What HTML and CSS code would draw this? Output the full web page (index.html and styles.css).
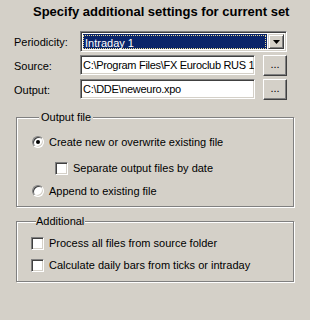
FILE: index.html
```html
<!DOCTYPE html>
<html lang="en">
<head>
  <meta charset="UTF-8" />
  <title>Additional settings</title>
  <link rel="stylesheet" href="styles.css">
</head>
<body>

<div class="dialog">
  <h1 class="title">Specify additional settings for current set</h1>

  <div class="fields">
    <label class="field-label">Periodicity:</label>
    <div class="combo">
      <span class="combo-value"><span class="combo-text">Intraday 1</span></span>
      <span class="combo-btn">
        <svg width="7" height="4" viewBox="0 0 7 4"><path d="M0 0h7L3.5 4z" fill="#000"/></svg>
      </span>
    </div>

    <label class="field-label">Source:</label>
    <div class="edit">C:\Program Files\FX Euroclub RUS 1</div>
    <button class="browse">...</button>

    <label class="field-label">Output:</label>
    <div class="edit">C:\DDE\neweuro.xpo</div>
    <button class="browse">...</button>
  </div>

  <fieldset class="group group-output">
    <legend>Output file</legend>
    <div class="option first"><span class="radio checked"></span>Create new or overwrite existing file</div>
    <div class="option sub"><span class="check"></span>Separate output files by date</div>
    <div class="option last"><span class="radio"></span>Append to existing file</div>
  </fieldset>

  <fieldset class="group group-additional">
    <legend>Additional</legend>
    <div class="option"><span class="check"></span>Process all files from source folder</div>
    <div class="option"><span class="check"></span>Calculate daily bars from ticks or intraday</div>
  </fieldset>
</div>

</body>
</html>
```

FILE: styles.css
```css
body {
  margin: 0;
  background: #d4d0c8;
  font-family: "Liberation Sans", Arial, sans-serif;
  font-size: 11px;
  color: #000;
}

.dialog {
  width: 310px;
  height: 320px;
  overflow: hidden;
}

.title {
  margin: 0;
  padding: 4px 0 0 33px;
  font-size: 13px;
  line-height: 16px;
  font-weight: bold;
  white-space: nowrap;
}

/* label / field / button rows */
.fields {
  display: grid;
  grid-template-columns: 66px 175px 32px;
  grid-auto-rows: 21px;
  row-gap: 3px;
  padding: 11px 0 0 14px;
}

.field-label {
  display: flex;
  align-items: center;
}

.combo,
.edit {
  box-sizing: border-box;
  background: #fff;
  border: 1px solid;
  border-color: #808080 #fff #fff #808080;
  box-shadow: inset 1px 1px 0 #404040, inset -1px -1px 0 #d4d0c8;
}

.combo {
  grid-column: span 2;
  display: flex;
  padding: 2px;
}

.combo-value {
  flex: 1;
  background: #0a246a;
  padding: 1px 1px 0 0;
  display: flex;
}

.combo-text {
  flex: 1;
  border: 1px dotted #e8d890;
  color: #fff;
  padding-left: 1px;
  line-height: 14px;
}

.combo-btn {
  width: 16px;
  margin-left: 1px;
  box-sizing: border-box;
  background: #d4d0c8;
  border: 1px solid;
  border-color: #d4d0c8 #404040 #404040 #d4d0c8;
  box-shadow: inset 1px 1px 0 #fff, inset -1px -1px 0 #808080;
  display: flex;
  align-items: center;
  justify-content: center;
}

.edit {
  height: 20px;
  padding: 0 2px;
  line-height: 18px;
  letter-spacing: -0.3px;
  white-space: nowrap;
  overflow: hidden;
}

.browse {
  justify-self: end;
  width: 24px;
  height: 21px;
  padding: 0 0 3px;
  font: inherit;
  line-height: 12px;
  background: #d4d0c8;
  border: 1px solid;
  border-color: #fff #404040 #404040 #fff;
  box-shadow: inset -1px -1px 0 #808080, inset 1px 1px 0 #d4d0c8;
}

/* group boxes */
.group {
  margin: 10px 16px 0;
  padding: 0;
  border: 1px solid #808080;
  box-shadow: 1px 1px 0 #fff, inset 1px 1px 0 #fff;
}

.group legend {
  margin-left: 7px;
  padding: 0 2px;
  line-height: 14px;
  background: #d4d0c8;
}

.group-output {
  padding: 10px 0 7px 15px;
}

.group-additional {
  margin-top: 7px;
  padding: 7px 0 8px 14px;
}

.group-additional legend {
  margin-left: 5px;
  padding: 0 1px 0 0;
}

.option {
  display: flex;
  align-items: center;
  height: 16px;
  white-space: nowrap;
}

.group-output .option + .option {
  margin-top: 10px;
}

.group-output .option.last {
  margin-top: 7px;
}

.group-additional .option + .option {
  margin-top: 6px;
}

.option.sub {
  padding-left: 23px;
}

.radio {
  position: relative;
  width: 12px;
  height: 12px;
  box-sizing: border-box;
  margin-right: 5px;
  border-radius: 50%;
  background: #fff;
  border: 1px solid;
  border-color: #808080 #fff #fff #808080;
  box-shadow: inset 1px 1px 0 #404040, inset -1px -1px 0 #d4d0c8;
}

.radio.checked::after {
  content: "";
  position: absolute;
  left: 3px;
  top: 3px;
  width: 4px;
  height: 4px;
  border-radius: 50%;
  background: #000;
}

.check {
  width: 13px;
  height: 13px;
  box-sizing: border-box;
  margin-right: 5px;
  background: #fff;
  border: 1px solid;
  border-color: #808080 #fff #fff #808080;
  box-shadow: inset 1px 1px 0 #404040, inset -1px -1px 0 #d4d0c8;
}
```
